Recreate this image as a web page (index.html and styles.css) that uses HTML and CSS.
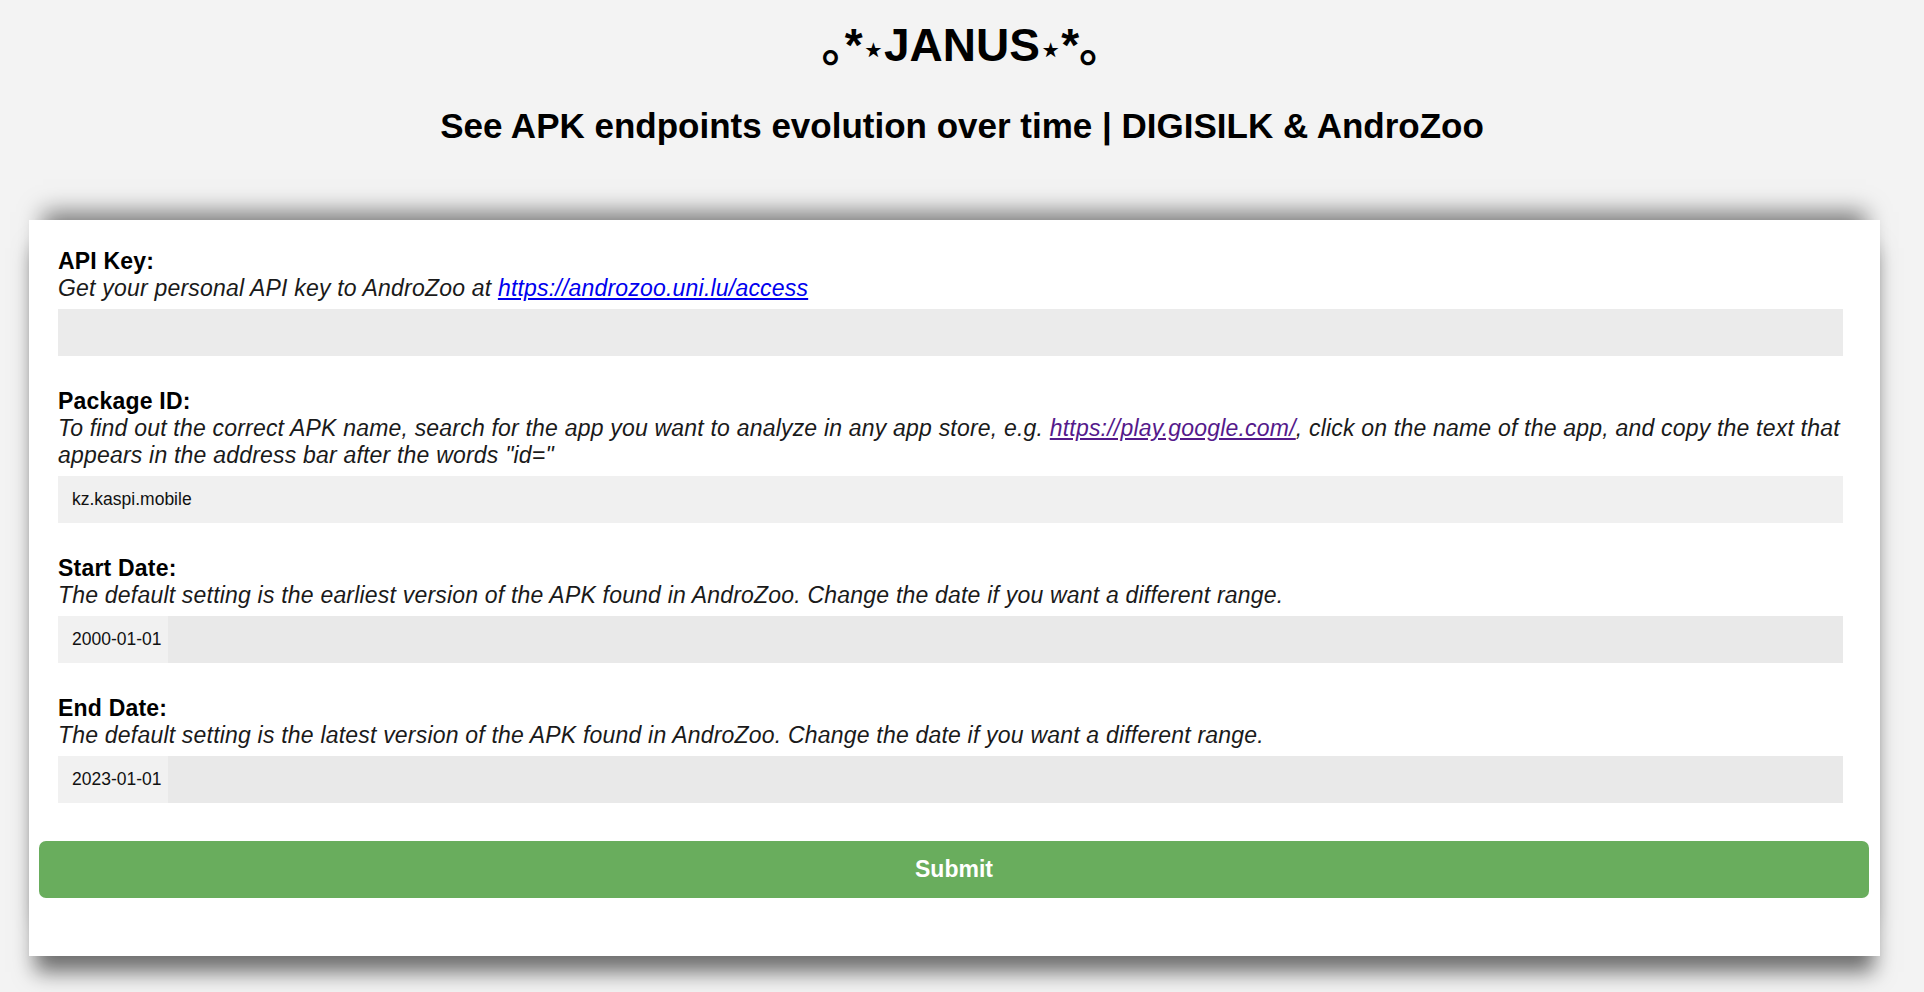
FILE: index.html
```html
<!DOCTYPE html>
<html lang="en">
<head>
<meta charset="utf-8">
<title>JANUS</title>
<link rel="stylesheet" href="styles.css">
</head>
<body>
<header class="header">
  <h1 class="title">｡*<span class="star">⋆</span>JANUS<span class="star">⋆</span>*｡</h1>
  <h2 class="subtitle">See APK endpoints evolution over time | DIGISILK &amp; AndroZoo</h2>
</header>
<main class="card">
  <form class="form">
    <div class="group">
      <label class="label" for="apikey">API Key:</label>
      <p class="desc">Get your personal API key to AndroZoo at <a class="link" href="#">https://androzoo.uni.lu/access</a></p>
      <input class="field field-empty" id="apikey" type="text" value="">
    </div>
    <div class="group">
      <label class="label" for="pkg">Package ID:</label>
      <p class="desc">To find out the correct APK name, search for the app you want to analyze in any app store, e.g. <a class="link link-visited" href="#">https://play.google.com/</a>, click on the name of the app, and copy the text that appears in the address bar after the words "id="</p>
      <input class="field field-filled" id="pkg" type="text" value="kz.kaspi.mobile">
    </div>
    <div class="group">
      <label class="label" for="start">Start Date:</label>
      <p class="desc">The default setting is the earliest version of the APK found in AndroZoo. Change the date if you want a different range.</p>
      <input class="field field-date" id="start" type="text" value="2000-01-01">
    </div>
    <div class="group">
      <label class="label" for="end">End Date:</label>
      <p class="desc">The default setting is the latest version of the APK found in AndroZoo. Change the date if you want a different range.</p>
      <input class="field field-date" id="end" type="text" value="2023-01-01">
    </div>
    <button class="submit" type="button">Submit</button>
  </form>
</main>
</body>
</html>
```
FILE: styles.css
```css
html, body {
  margin: 0;
  padding: 0;
}
body {
  background: #f3f3f3;
  font-family: "Liberation Sans", Arial, sans-serif;
  color: #000;
  overflow: hidden;
  min-height: 992px;
}
.header {
  padding-top: 19px;
  text-align: center;
}
.title {
  margin: 0;
  height: 53px;
  font-size: 46px;
  line-height: 53px;
  font-weight: bold;
  font-family: "Liberation Sans", "DejaVu Sans", "Noto Sans CJK JP", sans-serif;
}
.star {
  font-size: 34px;
  line-height: 1;
}
.subtitle {
  margin: 34px 0 0;
  font-size: 35px;
  line-height: 40px;
  font-weight: bold;
}
.card {
  margin: 74px 44px 0 29px;
  background: #fff;
  padding: 28px 11px 58px 10px;
  box-shadow: 0 -22px 22px -14px rgba(0, 0, 0, 0.5), 0 22px 20px -6px rgba(0, 0, 0, 0.55);
}
.form {
  display: flex;
  flex-direction: column;
}
.group {
  display: flex;
  flex-direction: column;
  padding: 0 26px 0 19px;
  margin-bottom: 32px;
}
.group:last-of-type {
  margin-bottom: 38px;
}
.label {
  font-size: 23px;
  line-height: 27px;
  letter-spacing: 0.2px;
  font-weight: bold;
}
.desc {
  margin: 0;
  font-size: 23px;
  line-height: 27px;
  letter-spacing: 0.2px;
  font-style: italic;
  color: #1a1a1a;
}
.link {
  color: #0000ee;
  text-decoration: underline;
}
.link-visited {
  color: #551a8b;
}
.field {
  margin-top: 7px;
  height: 47px;
  box-sizing: border-box;
  border: none;
  outline: none;
  padding: 0 14px;
  font-family: "Liberation Sans", Arial, sans-serif;
  font-size: 17.5px;
  color: #111;
  width: 100%;
}
.field-empty {
  background: #ebebeb;
}
.field-filled {
  background: #f0f0f0;
}
.field-date {
  background: linear-gradient(to right, #f1f1f1 0, #f1f1f1 110px, #e9e9e9 110px);
}
.submit {
  height: 57px;
  border: none;
  border-radius: 7px;
  background: #69ad5d;
  color: #fff;
  font-family: "Liberation Sans", Arial, sans-serif;
  font-weight: bold;
  font-size: 23px;
  cursor: pointer;
}
```
